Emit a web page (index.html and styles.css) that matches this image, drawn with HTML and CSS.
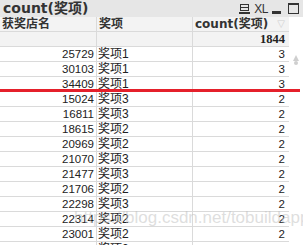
FILE: index.html
```html
<!DOCTYPE html>
<html>
<head>
<meta charset="utf-8">
<link rel="stylesheet" href="styles.css">
</head>
<body>
<div class="win">
  <div class="caption">
    <span class="title">count(奖项)</span>
    <div class="tools">
      <svg class="ico-print" width="11" height="11" viewBox="0 0 11 11"><rect x="1.5" y="0.5" width="8" height="6" fill="none" stroke="#333"/><line x1="1.5" y1="3.5" x2="9.5" y2="3.5" stroke="#333"/><rect x="0" y="8" width="11" height="2" fill="#333"/></svg>
      <span class="xl">XL</span>
      <span class="min"></span>
      <span class="max"></span>
    </div>
  </div>
  <div class="body">
    <div class="table">
      <div class="row head"><div class="c c1 b">获奖店名</div><div class="c c2 b">奖项</div><div class="c c3 b">count(奖项)<span class="filter">▽</span></div></div>
      <div class="row total"><div class="c c1"></div><div class="c c2"></div><div class="c c3 num tb">1844</div></div>
      <div class="row"><div class="c c1 num">25729</div><div class="c c2">奖项1</div><div class="c c3 num">3</div></div>
      <div class="row"><div class="c c1 num">30103</div><div class="c c2">奖项1</div><div class="c c3 num">3</div></div>
      <div class="row"><div class="c c1 num">34409</div><div class="c c2">奖项1</div><div class="c c3 num">3</div></div>
      <div class="row"><div class="c c1 num">15024</div><div class="c c2">奖项3</div><div class="c c3 num">2</div></div>
      <div class="row"><div class="c c1 num">16811</div><div class="c c2">奖项3</div><div class="c c3 num">2</div></div>
      <div class="row"><div class="c c1 num">18615</div><div class="c c2">奖项2</div><div class="c c3 num">2</div></div>
      <div class="row"><div class="c c1 num">20969</div><div class="c c2">奖项2</div><div class="c c3 num">2</div></div>
      <div class="row"><div class="c c1 num">21070</div><div class="c c2">奖项3</div><div class="c c3 num">2</div></div>
      <div class="row"><div class="c c1 num">21477</div><div class="c c2">奖项3</div><div class="c c3 num">2</div></div>
      <div class="row"><div class="c c1 num">21706</div><div class="c c2">奖项2</div><div class="c c3 num">2</div></div>
      <div class="row"><div class="c c1 num">22298</div><div class="c c2">奖项3</div><div class="c c3 num">2</div></div>
      <div class="row"><div class="c c1 num">22314</div><div class="c c2">奖项2</div><div class="c c3 num">2</div></div>
      <div class="row"><div class="c c1 num">23001</div><div class="c c2">奖项2</div><div class="c c3 num">2</div></div>
      <div class="row"><div class="c c1 num">23145</div><div class="c c2">奖项2</div><div class="c c3 num">2</div></div>
    </div>
    <div class="scroll">
      <span class="up"></span>
      <span class="dot"></span>
    </div>
  </div>
  <div class="redline"></div>
  <div class="watermark">https://blog.csdn.net/tobuildapp</div>
</div>
</body>
</html>
```
FILE: styles.css
```css
html, body {
  margin: 0;
  padding: 0;
  background: #fff;
}
.win {
  position: relative;
  width: 303px;
  height: 245px;
  overflow: hidden;
  font-family: "Liberation Sans Narrow", "Liberation Sans", "Noto Sans CJK SC", sans-serif;
  color: #222;
}
.caption {
  height: 17px;
  background: #e6e6e6;
  display: flex;
  align-items: center;
  justify-content: space-between;
}
.title {
  font-family: "DejaVu Sans", "Noto Sans CJK SC", sans-serif;
  font-weight: bold;
  font-size: 14px;
  color: #333;
  padding-left: 3px;
  line-height: 17px;
}
.tools {
  display: flex;
  align-items: center;
  height: 17px;
  padding-right: 4px;
}
.ico-print {
  margin-right: 4px;
  margin-top: 1px;
}
.xl {
  font-size: 12px;
  color: #333;
  letter-spacing: -0.5px;
  margin-right: 4px;
  line-height: 12px;
}
.min {
  width: 9px;
  height: 3px;
  background: #333;
  margin-top: 7px;
  margin-right: 7px;
}
.max {
  width: 9px;
  height: 8px;
  border: 1px solid #333;
  border-top-width: 2px;
}
.body {
  display: flex;
}
.table {
  width: 289px;
}
.scroll {
  width: 14px;
  position: relative;
}
.up {
  position: absolute;
  left: 4px;
  top: 38px;
  width: 0;
  height: 0;
  border-left: 3px solid transparent;
  border-right: 3px solid transparent;
  border-bottom: 6px solid #cfcfcf;
}
.dot {
  position: absolute;
  left: 5px;
  top: 44px;
  width: 4px;
  height: 4px;
  border-radius: 50%;
  background: #cfcfcf;
}
.row {
  display: grid;
  grid-template-columns: 97px 96px 96px;
  height: 15px;
  box-sizing: border-box;
  border-bottom: 1px solid #dadada;
  font-size: 12px;
  line-height: 14px;
}
.head, .total {
  background: #f3f3f3;
}
.c {
  box-sizing: border-box;
  white-space: nowrap;
  overflow: hidden;
  font-family: "Liberation Sans Narrow", "Liberation Sans", "Noto Sans CJK SC", sans-serif;
}
.c1, .c2 {
  border-right: 1px solid #dadada;
}
.c1 {
  padding-right: 2px;
}
.c2 {
  padding-left: 1px;
}
.c3 {
  padding-right: 4px;
  position: relative;
}
.num {
  text-align: right;
  font-size: 11.5px;
}
.b {
  font-weight: bold;
  padding-left: 2px;
  font-family: "DejaVu Sans", "Noto Sans CJK SC", sans-serif;
  font-size: 12px;
  color: #333;
}
.tb {
  font-weight: bold;
  font-family: "Liberation Serif", serif;
  font-size: 12.5px;
}
.filter {
  position: absolute;
  right: 4px;
  top: 0;
  font-weight: normal;
  color: #d0d0d0;
  font-size: 10px;
}
.redline {
  position: absolute;
  left: 0;
  top: 89px;
  width: 300px;
  height: 3px;
  background: #e5202b;
}
.watermark {
  position: absolute;
  left: 74px;
  top: 208px;
  font-family: "Liberation Sans", sans-serif;
  font-size: 17px;
  color: rgba(190, 190, 190, 0.5);
  white-space: nowrap;
  pointer-events: none;
}
```
